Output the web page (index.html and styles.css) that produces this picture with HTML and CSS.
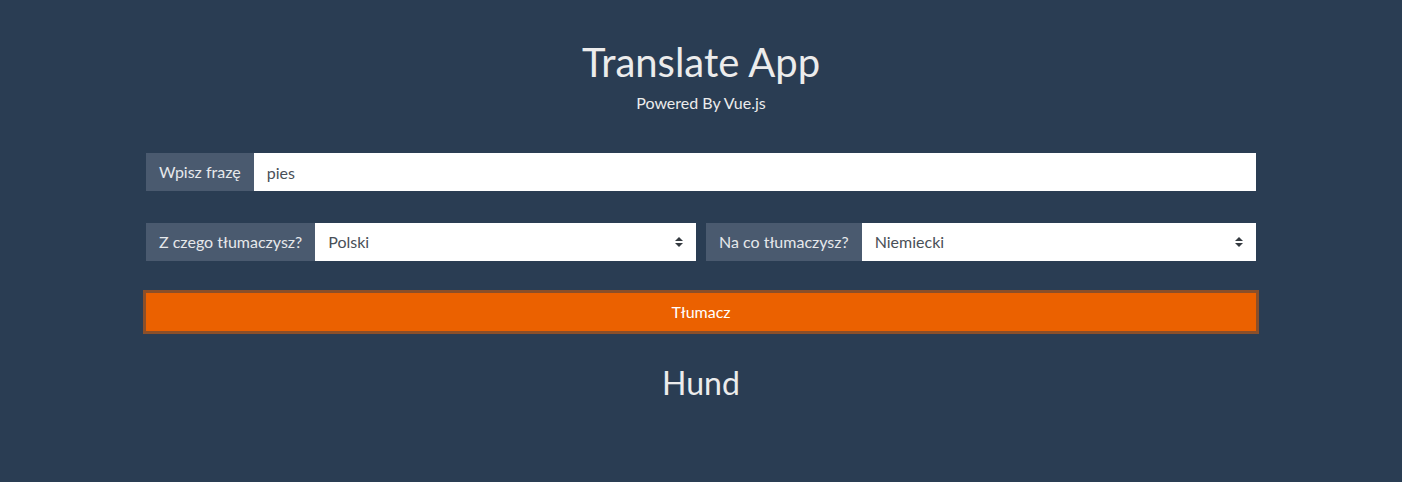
FILE: index.html
```html
<!DOCTYPE html>
<html lang="pl">
<head>
<meta charset="utf-8">
<title>Translate App</title>
<link rel="stylesheet" href="styles.css">
</head>
<body>
<div class="app">
  <header class="header">
    <h1 class="title">Translate App</h1>
    <p class="subtitle">Powered By Vue.js</p>
  </header>

  <div class="input-group">
    <span class="label">Wpisz frazę</span>
    <input class="field" type="text" value="pies">
  </div>

  <div class="row">
    <div class="input-group col">
      <span class="label">Z czego tłumaczysz?</span>
      <div class="select-wrap">
        <select class="field select"><option>Polski</option></select>
        <svg class="arrow" width="8" height="10" viewBox="0 0 4 5"><path fill="#343a40" d="M2 0L0 2h4zm0 5L0 3h4z"/></svg>
      </div>
    </div>
    <div class="input-group col">
      <span class="label">Na co tłumaczysz?</span>
      <div class="select-wrap">
        <select class="field select"><option>Niemiecki</option></select>
        <svg class="arrow" width="8" height="10" viewBox="0 0 4 5"><path fill="#343a40" d="M2 0L0 2h4zm0 5L0 3h4z"/></svg>
      </div>
    </div>
  </div>

  <button class="btn" type="button">Tłumacz</button>

  <h2 class="result">Hund</h2>
</div>
</body>
</html>
```
FILE: styles.css
```css
* { box-sizing: border-box; }
html, body { margin: 0; padding: 0; }
body {
  background: #2a3d53;
  font-family: Lato, "Open Sans", sans-serif;
  color: #ececec;
}
.app {
  width: 1110px;
  margin: 0 auto;
  padding-top: 38px;
}
.header { text-align: center; }
.title {
  margin: 0;
  font-size: 40px;
  line-height: 48px;
  font-weight: 400;
  color: #ececec;
}
.subtitle {
  margin: 5px 0 0;
  font-size: 16px;
  line-height: 24px;
  color: #ececec;
}
.input-group {
  display: flex;
  height: 38px;
  margin-top: 38px;
}
.label {
  display: flex;
  align-items: center;
  padding: 0 12px;
  border: 1px solid #4a5a6f;
  background: #4a5a6f;
  color: #e6e8eb;
  font-size: 16px;
  line-height: 24px;
  white-space: nowrap;
}
.field {
  flex: 1;
  min-width: 0;
  height: 38px;
  margin: 0;
  padding: 6px 12px;
  border: 1px solid #fff;
  background: #fff;
  color: #495057;
  font-family: Lato, "Open Sans", sans-serif;
  font-size: 16px;
  line-height: 24px;
  outline: none;
  border-radius: 0;
}
.row {
  display: flex;
  gap: 10px;
  margin-top: 32px;
}
.row .input-group { margin-top: 0; flex: 1; }
.select-wrap {
  flex: 1;
  display: flex;
  position: relative;
}
.select {
  -webkit-appearance: none;
  appearance: none;
  padding-right: 28px;
}
.arrow {
  position: absolute;
  right: 13px;
  top: 14px;
}
.btn {
  display: block;
  width: 100%;
  height: 38px;
  margin-top: 32px;
  padding: 6px 12px;
  border: 1px solid #eb6100;
  background: #eb6100;
  color: #fff;
  font-family: Lato, "Open Sans", sans-serif;
  font-size: 16px;
  line-height: 24px;
  box-shadow: 0 0 0 3px rgba(235, 97, 0, 0.5);
  border-radius: 0;
}
.result {
  margin: 33px 0 0;
  text-align: center;
  font-size: 32px;
  line-height: 38px;
  font-weight: 400;
  color: #ececec;
}
```
